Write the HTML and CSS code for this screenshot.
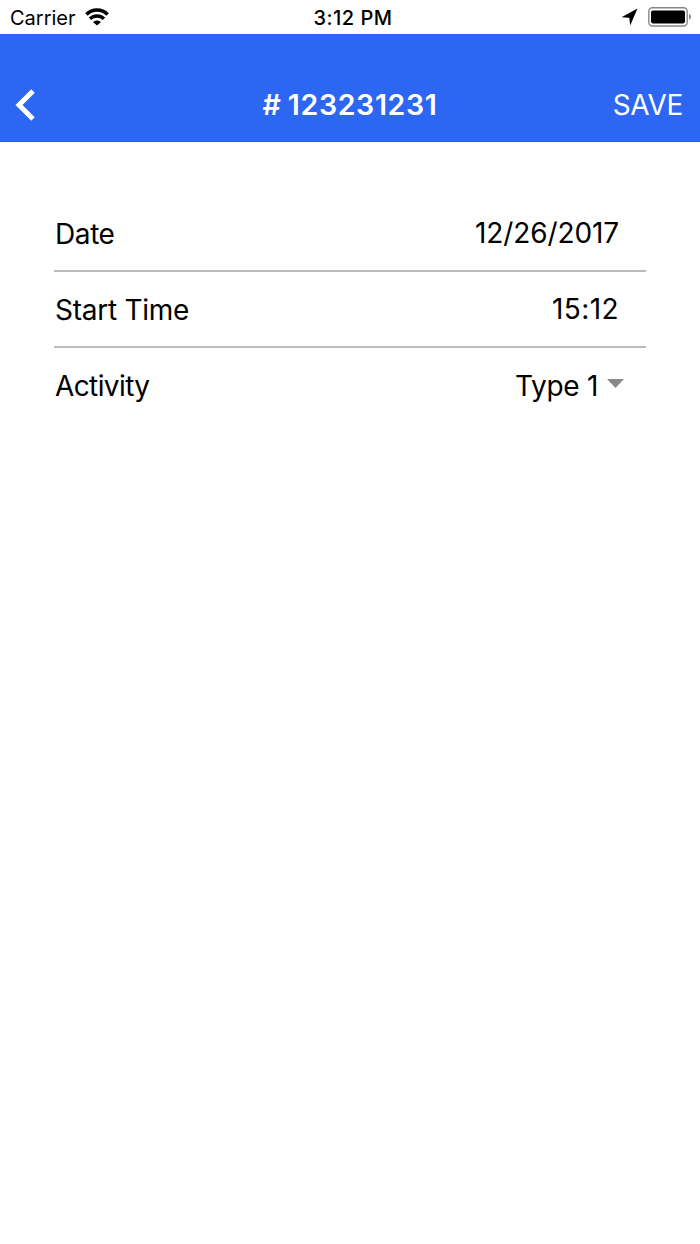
FILE: index.html
```html
<!DOCTYPE html>
<html lang="en">
<head>
<meta charset="utf-8">
<title># 123231231</title>
<link rel="stylesheet" href="styles.css">
</head>
<body>
<div class="status">
  <div class="status-left"><span class="carrier">Carrier</span>
    <svg class="wifi" width="24" height="18" viewBox="0 0 24 18"><g fill="none" stroke="#000" stroke-width="3.6"><path d="M1.4 6.4C7.2.5 16.8.5 22.6 6.4"/><path d="M5 10.8C9 7 15 7 19 10.8"/></g><path d="M8 14.1C10.3 11.8 13.7 11.8 16 14.1L12 17.6z"/></svg>
  </div>
  <div class="clock">3:12 PM</div>
  <div class="status-right">
    <svg class="location" width="17" height="18" viewBox="0 0 17 18"><path d="M16.5.5L9.2 17.5L8.3 9.8L.5 9.2z"/></svg>
    <svg class="battery" width="44" height="20" viewBox="0 0 44 20"><rect x=".8" y=".8" width="38.4" height="18.2" rx="3.5" fill="none" stroke="#888" stroke-width="1.4"/><rect x="3" y="3.4" width="34" height="13" rx="1.8"/><path d="M41 6.8Q43 7.5 43 9.8T41 12.8z" fill="#888"/></svg>
  </div>
</div>
<header class="header">
  <div class="back"><svg width="20" height="32" viewBox="0 0 20 32"><path d="M18 2L4 16L18 30" fill="none" stroke="#fff" stroke-width="5"/></svg></div>
  <h1 class="title"># 123231231</h1>
  <div class="save">SAVE</div>
</header>
<main class="form">
  <div class="row"><span class="label date">Date</span><span class="value v-date">12/26/2017</span></div>
  <div class="row"><span class="label start">Start Time</span><span class="value v-time">15:12</span></div>
  <div class="row last"><span class="label activity">Activity</span><span class="value v-type">Type 1</span><svg class="caret" width="17" height="9" viewBox="0 0 17 9"><path d="M0 0H17L8.5 9z" fill="#888"/></svg></div>
</main>
</body>
</html>
```
FILE: styles.css
```css
body { margin: 0; height: 1244px; background: #fff; color: #000; font-family: Inter, sans-serif; }
svg { display: block; flex: none; }
span, .clock, .title, .save { white-space: nowrap; }
.status { box-sizing: border-box; height: 34px; display: grid; grid-template-columns: 300px 106px 294px; align-items: center; font-size: 20px; }
.status-left { display: flex; align-items: center; gap: 9px; padding-left: 10px; }
.carrier { padding-top: 2px; }
.clock { padding-top: 2px; text-align: center; font-weight: 550; letter-spacing: .5px; }
.status-right { display: flex; align-items: center; justify-content: flex-end; gap: 10px; padding-right: 8px; }
.header { box-sizing: border-box; height: 108px; padding-top: 34px; display: grid; grid-template-columns: 200px 300px 200px; align-items: center; background: #2c66f3; color: #fff; border-bottom: 1px solid #2a5cd6; }
.back { padding-left: 15px; }
.title { margin: 0; text-align: center; font-size: 28.5px; font-weight: 580; letter-spacing: .65px; word-spacing: -1.5px; }
.save { text-align: right; padding-right: 17px; font-size: 28px; font-weight: 370; letter-spacing: -.3px; }
.form { padding: 54px 54px 0; }
.row { box-sizing: border-box; height: 76px; padding: 0 27px 0 1px; display: flex; align-items: center; justify-content: space-between; border-bottom: 2px solid #bbbbbe; font-size: 28px; }
.row:not(.last) .label { padding-top: 2px; }
.row.last { border-bottom: 0; padding-right: 22px; }
.last .value { margin-left: auto; }
.date { letter-spacing: -.4px; }
.start { letter-spacing: -.27px; }
.activity { letter-spacing: -.6px; }
.v-date { letter-spacing: -.1px; }
.v-time { letter-spacing: .4px; }
.v-type { letter-spacing: -.3px; }
.caret { margin: 0 0 6px 9px; }
```
